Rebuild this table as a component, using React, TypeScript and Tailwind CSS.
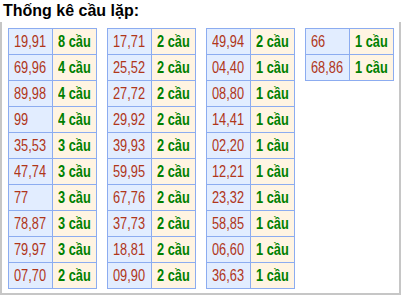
const columns: [string, number][][] = [
  [
    ["19,91", 8],
    ["69,96", 4],
    ["89,98", 4],
    ["99", 4],
    ["35,53", 3],
    ["47,74", 3],
    ["77", 3],
    ["78,87", 3],
    ["79,97", 3],
    ["07,70", 2],
  ],
  [
    ["17,71", 2],
    ["25,52", 2],
    ["27,72", 2],
    ["29,92", 2],
    ["39,93", 2],
    ["59,95", 2],
    ["67,76", 2],
    ["37,73", 2],
    ["18,81", 2],
    ["09,90", 2],
  ],
  [
    ["49,94", 2],
    ["04,40", 1],
    ["08,80", 1],
    ["14,41", 1],
    ["02,20", 1],
    ["12,21", 1],
    ["23,32", 1],
    ["58,85", 1],
    ["06,60", 1],
    ["36,63", 1],
  ],
  [
    ["66", 1],
    ["68,86", 1],
  ],
];

export default function App() {
  return (
    <div className="w-[401px] h-[295px] overflow-hidden bg-white font-['Liberation_Sans',Arial,sans-serif]">
      {/* Title */}
      <div className="h-[22px] pl-[3px] pt-[1px] text-[16px] leading-[20px] font-bold text-black">
        Thống kê cầu lặp:
      </div>

      {/* Box */}
      <div className="h-[273px] border-2 border-t-0 border-[#c6c6c6] pl-[6px] pt-[6px]">
        <div className="flex items-start gap-[10px]">
          {columns.map((rows, i) => (
            <table
              key={i}
              className="w-[89px] border-collapse table-fixed text-[16px]"
            >
              <tbody>
                {rows.map(([pair, count]) => (
                  <tr key={pair} className="h-[26px]">
                    <td className="w-[44px] border border-[#8cacf0] bg-[#e2edff] pl-[5px] p-0 whitespace-nowrap text-[#b0361a] leading-none">
                      <span className="inline-block origin-left scale-x-[0.8]">{pair}</span>
                    </td>
                    <td className="border border-[#8cacf0] bg-[#fff4e2] pl-[5px] p-0 whitespace-nowrap font-bold text-[#008000] leading-none">
                      <span className="inline-block origin-left scale-x-[0.8]">{count} cầu</span>
                    </td>
                  </tr>
                ))}
              </tbody>
            </table>
          ))}
        </div>
      </div>
    </div>
  );
}
